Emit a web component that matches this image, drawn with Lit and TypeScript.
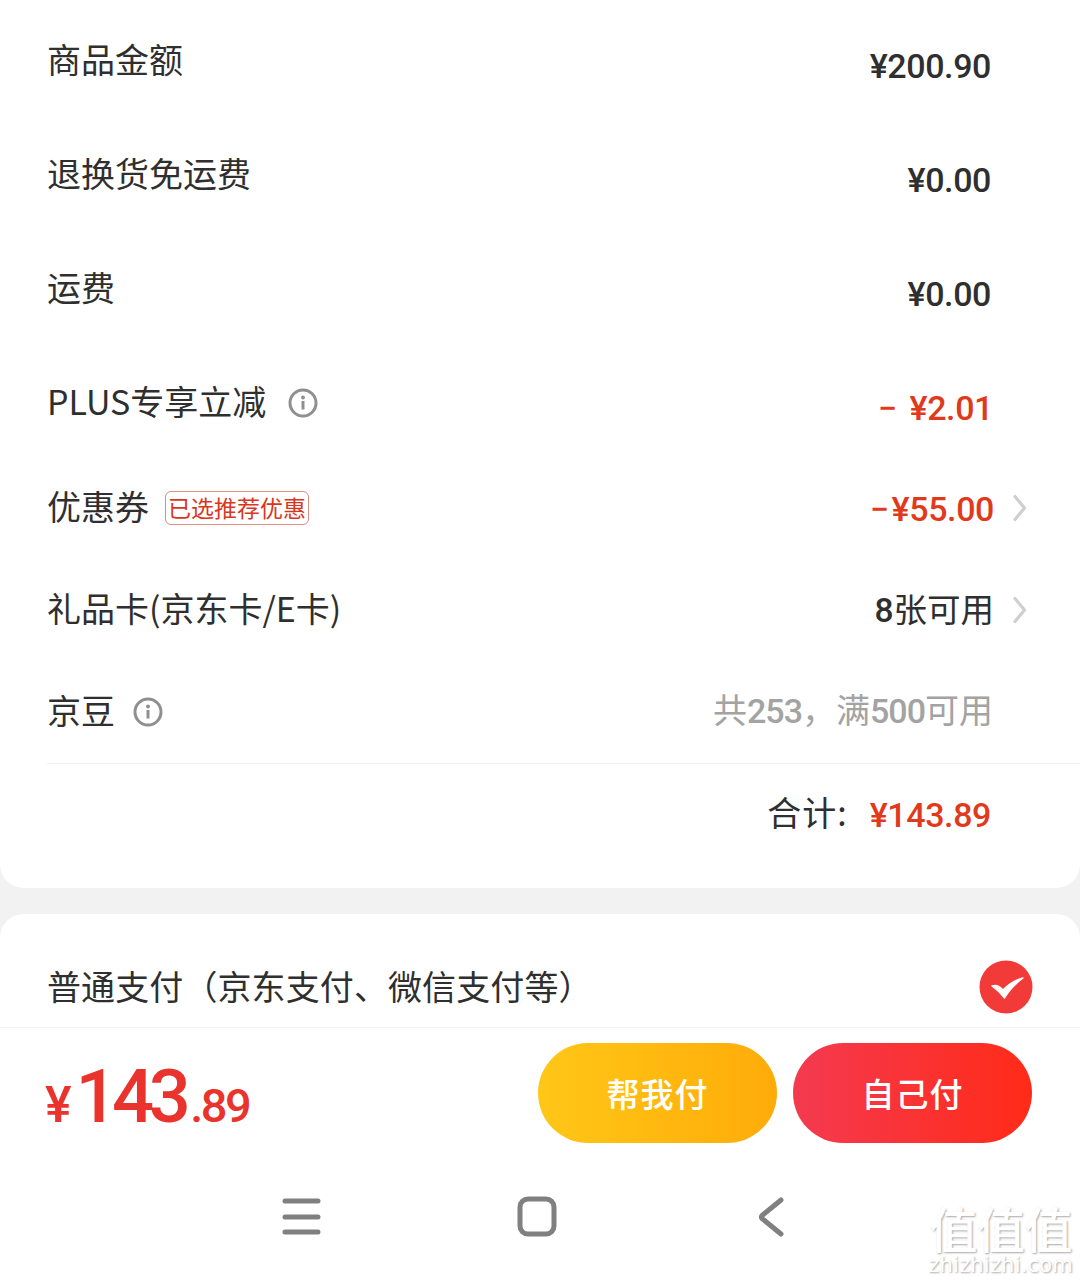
import { LitElement, html, css, svg } from "lit";
import { customElement } from "lit/decorators.js";

const info = (cls = "") => html`<svg class="info ${cls}" viewBox="0 0 30 30"><circle cx="15" cy="15" r="13" fill="none" stroke="#8f8f8f" stroke-width="3"/><circle cx="15" cy="9.500" r="1.900" fill="#8f8f8f"/><path d="M15 13v8.500" fill="none" stroke="#8f8f8f" stroke-width="3"/></svg>`;
const chev = html`<svg class="chev" viewBox="0 0 14 28"><path d="M2 2.500 11.500 14 2 25.500" fill="none" stroke="#cfcfcf" stroke-width="3.200" stroke-linecap="round" stroke-linejoin="round"/></svg>`;

@customElement("app-root")
export class AppRoot extends LitElement {
  static styles = css`
    :host { display: block; width: 1080px; height: 1282px; overflow: hidden; position: relative; background: #f2f2f2; font-family: "Noto Sans CJK SC", sans-serif; color: #2f2f2f; }
    .card1 { background: #fff; height: 888px; box-sizing: border-box; padding-top: 10px; border-radius: 0 0 24px 24px; }
    .row { height: 102px; margin-bottom: 12px; padding: 0 89px 0 47px; display: flex; align-items: center; justify-content: space-between; }
    .row.b { margin-bottom: 3px; }
    .row.c { margin-bottom: 0; }
    .row.n { padding-right: 53px; }
    .label { font-size: 34px; display: flex; align-items: center; line-height: 1; white-space: nowrap; }
    .label > span.lt { position: relative; top: -2px; }
    .num { font-family: Roboto, sans-serif; font-weight: 500; font-size: 34px; line-height: 1; position: relative; top: 5px; white-space: nowrap; letter-spacing: -.4px; }
    .red { color: #e1391c; }
    .up { top: 1px; }
    .gap { margin-right: 13px; }
    .gap3 { margin-right: 3px; }
    .push { margin-right: -2px; }
    .info { width: 30px; height: 30px; margin-left: 22px; }
    .info.near { margin-left: 18px; }
    .tag { font-size: 23px; line-height: 30px; height: 32px; width: 142px; text-align: center; border: 1px solid #d98e7f; border-radius: 6px; color: #d8371f; margin-left: 16px; }
    .right { display: flex; align-items: center; gap: 19px; }
    .chev { width: 14px; height: 28px; }
    .avail { font-size: 33.500px; line-height: 1; position: relative; top: -1px; }
    .avail b { font-family: Roboto, sans-serif; font-weight: 500; }
    .grey { color: #a3a3a3; font-size: 34px; line-height: 1; position: relative; top: -2px; margin-right: -2px; }
    .grey b { font-family: Roboto, sans-serif; font-weight: 500; letter-spacing: -1px; }
    .divider { margin: 0 0 0 47px; height: 1px; background: #f0f0f0; }
    .total { height: 101px; padding-right: 89px; display: flex; align-items: center; justify-content: flex-end; gap: 22px; }
    .total .t { font-size: 34px; letter-spacing: 1px; line-height: 1; position: relative; top: -3px; }
    .total .num { top: 0; }
    .card2 { margin-top: 26px; background: #fff; height: 114px; box-sizing: border-box; border-radius: 24px 24px 0 0; padding: 0 47px; display: flex; align-items: center; justify-content: space-between; border-bottom: 1px solid #f2f2f2; }
    .pay { font-size: 34px; letter-spacing: .1px; line-height: 1; white-space: nowrap; position: relative; top: 15px; }
    .tick { width: 54px; height: 54px; position: relative; top: 16px; }
    .bottom { background: #fff; height: 254px; box-sizing: border-box; padding-top: 15px; }
    .bar { display: flex; align-items: center; justify-content: space-between; padding: 0 48px 0 45px; }
    .price { font-family: Roboto, sans-serif; font-weight: 500; color: #e9332c; display: flex; align-items: baseline; line-height: 1; position: relative; top: 4px; }
    .y { font-size: 50px; margin-right: 4px; }
    .big { font-size: 74px; letter-spacing: -5.500px; margin-right: 5px; }
    .small { font-size: 47px; letter-spacing: -2.500px; }
    .btns { display: flex; gap: 16px; }
    .btn { width: 239px; height: 100px; border-radius: 50px; display: flex; align-items: center; justify-content: center; color: #fff; font-size: 33px; font-weight: 500; letter-spacing: 1px; }
    .yl { background: linear-gradient(90deg, #ffc717, #ffab09); }
    .rd { background: linear-gradient(90deg, #f43a50, #ff2b18); }
    .nav { display: flex; align-items: center; padding: 51px 0 0 278px; gap: 191px; }
    .nav svg { width: 46px; height: 46px; }
    .mark { position: absolute; right: 7px; bottom: 6px; display: flex; flex-direction: column; align-items: center; gap: 2px; color: #fff; text-shadow: 1px 1px 2px #a8a8a8; }
    .mark .zh { font-size: 48px; line-height: 50px; letter-spacing: -.5px; font-weight: 500; }
    .mark .en { font-family: "DejaVu Sans", sans-serif; font-size: 21px; line-height: 22px; letter-spacing: .2px; }
  `;

  render() {
    return html`
      <div class="card1">
        <div class="row"><span class="label"><span class="lt">商品金额</span></span><span class="num">¥200.90</span></div>
        <div class="row"><span class="label"><span class="lt">退换货免运费</span></span><span class="num">¥0.00</span></div>
        <div class="row"><span class="label"><span class="lt">运费</span></span><span class="num">¥0.00</span></div>
        <div class="row b"><span class="label"><span class="lt">PLUS专享立减</span>${info()}</span><span class="num red push"><span class="gap">−</span>¥2.01</span></div>
        <div class="row c n"><span class="label"><span class="lt">优惠券</span><span class="tag">已选推荐优惠</span></span><span class="right"><span class="num red up"><span class="gap3">−</span>¥55.00</span>${chev}</span></div>
        <div class="row c n"><span class="label"><span class="lt">礼品卡(京东卡/E卡)</span></span><span class="right"><span class="avail"><b>8</b>张可用</span>${chev}</span></div>
        <div class="row c"><span class="label"><span class="lt">京豆</span>${info("near")}</span><span class="grey">共<b>253</b>，满<b>500</b>可用</span></div>
        <div class="divider"></div>
        <div class="total"><span class="t">合计:</span><span class="num red">¥143.89</span></div>
      </div>
      <div class="card2">
        <span class="pay">普通支付（京东支付、微信支付等）</span>
        <svg class="tick" viewBox="0 0 54 54"><circle cx="27" cy="27" r="26.500" fill="#f23a38"/><path d="M13 26C17 24.500 21 26.500 24 30 29 25 36 20 44 18 36 24 29.500 31 25.500 38 22 33.500 18 29.500 13 26Z" fill="#fff" stroke="#fff" stroke-width="1.500" stroke-linejoin="round"/></svg>
      </div>
      <div class="bottom">
        <div class="bar">
          <div class="price"><span class="y">¥</span><span class="big">143</span><span class="small">.89</span></div>
          <div class="btns"><div class="btn yl">帮我付</div><div class="btn rd">自己付</div></div>
        </div>
        <div class="nav">
          <svg viewBox="0 0 46 46">${svg`<path d="M7 7h33M7 23h33M7 38h33" stroke="#808080" stroke-width="5" stroke-linecap="round" fill="none"/>`}</svg>
          <svg viewBox="0 0 46 46">${svg`<rect x="5" y="5" width="34" height="35" rx="8" stroke="#808080" stroke-width="5" fill="none"/>`}</svg>
          <svg viewBox="0 0 46 46">${svg`<path d="M29 6 10 21.500a2 2 0 0 0 0 3L29 40" stroke="#808080" stroke-width="5" stroke-linecap="round" stroke-linejoin="round" fill="none"/>`}</svg>
        </div>
      </div>
      <div class="mark"><span class="zh">值值值</span><span class="en">zhizhizhi.com</span></div>
    `;
  }
}
